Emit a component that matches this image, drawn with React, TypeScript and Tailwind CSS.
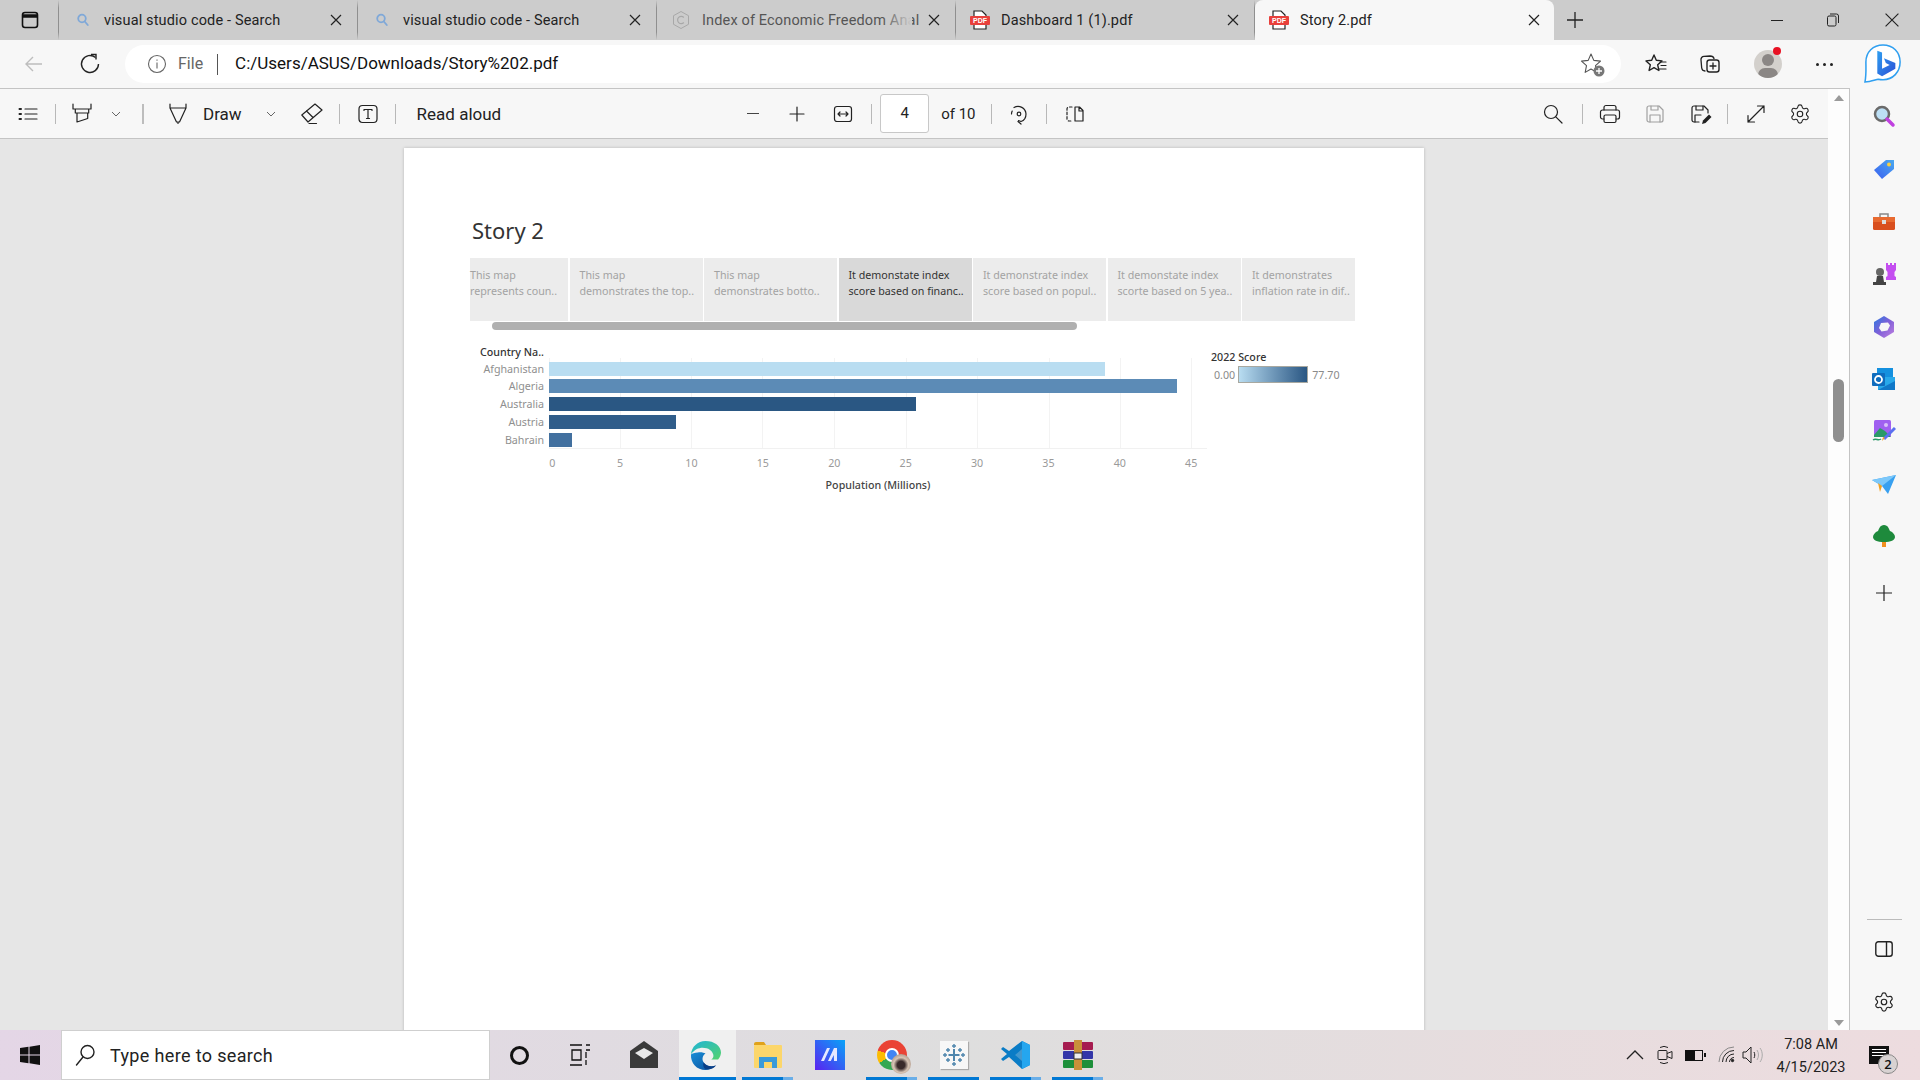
import React from "react";
import { Settings } from "lucide-react";

const S = ({ className = "", children, vb = "0 0 20 20" }: { className?: string; children: React.ReactNode; vb?: string }) => (
  <svg viewBox={vb} fill="none" stroke="#222" strokeWidth="1.2" strokeLinecap="round" strokeLinejoin="round" className={"shrink-0 " + className}>
    {children}
  </svg>
);

const Sep = ({ className = "" }: { className?: string }) => <div className={"w-px h-[20px] bg-[#b8b8b8] shrink-0 " + className} />;

const Lens = () => (
  <svg viewBox="0 0 16 16" className="w-[16px] h-[16px] shrink-0" fill="none" stroke="#7fa8d8" strokeWidth="1.8" strokeLinecap="round">
    <circle cx="7" cy="6.5" r="3.8" />
    <path d="M9.8 9.5l3 3.5" />
  </svg>
);

const CIcon = () => (
  <svg viewBox="0 0 20 20" className="w-[20px] h-[20px] shrink-0" fill="none" stroke="#a8a8a8" strokeWidth="1">
    <path d="M10 1.5l7.5 4.2v8.6L10 18.5l-7.5-4.2V5.7z" />
    <path d="M12.8 7.5a3.6 3.6 0 1 0 0 5" strokeWidth="1.2" />
  </svg>
);

const PdfIcon = () => (
  <div className="relative w-[20px] h-[20px] shrink-0">
    <svg viewBox="0 0 20 20" className="w-[20px] h-[20px]" fill="#fff" stroke="#222" strokeWidth="1.2">
      <path d="M4 1h8l4 4v14H4z" />
    </svg>
    <div className="absolute left-0 top-[6px] w-[20px] h-[9px] bg-[#e8403c] rounded-[1px] text-white text-[7px] leading-[9px] font-bold text-center font-['Liberation_Sans',sans-serif]">PDF</div>
  </div>
);

const X = ({ c = "#222" }: { c?: string }) => (
  <svg viewBox="0 0 12 12" className="w-[12px] h-[12px] shrink-0" fill="none" stroke={c} strokeWidth="1.2">
    <path d="M1 1l10 10M11 1L1 11" />
  </svg>
);

function Tab({ icon, title, active, fade }: { icon: React.ReactNode; title: string; active?: boolean; fade?: boolean }) {
  return (
    <div className={active ? "w-[299px] h-[40px] bg-[#f7f7f7] rounded-t-[8px] flex items-center shrink-0 pl-[14px]" : "w-[299px] h-[40px] flex items-center shrink-0 border-r border-[#8f8f8f] border-y-[8px] border-y-[#cccccc] pl-[14px]"}>
      <div className="w-[20px] flex justify-center shrink-0">{icon}</div>
      <div className={(fade ? "text-[#555] " : "text-[#222] ") + "relative ml-[11px] mt-[1px] w-[216px] whitespace-nowrap text-[14.5px] tracking-[0.15px]"}>
        {title}
        {fade && <div className="absolute left-[180px] top-0 bottom-0 w-[30px] bg-gradient-to-r from-transparent to-[#cccccc]" />}
      </div>
      <div className={active ? "ml-[12px]" : "ml-[10px]"}><X /></div>
    </div>
  );
}

function TabBar() {
  return (
    <div className="h-[40px] bg-[#cccccc] flex items-center shrink-0">
      <div className="w-[59px] h-[40px] flex items-center pl-[21px] border-r border-[#8f8f8f] border-y-[8px] border-y-[#cccccc] shrink-0">
        <svg viewBox="0 0 18 18" className="w-[18px] h-[18px]" fill="none" stroke="#111" strokeWidth="1.6">
          <rect x="1.5" y="1.5" width="15" height="15" rx="2.5" />
          <path d="M1.5 5h15" strokeWidth="3.5" />
        </svg>
      </div>
      <Tab icon={<Lens />} title="visual studio code - Search" />
      <Tab icon={<Lens />} title="visual studio code - Search" />
      <Tab icon={<CIcon />} title="Index of Economic Freedom Anal" fade />
      <Tab icon={<PdfIcon />} title="Dashboard 1 (1).pdf" />
      <Tab icon={<PdfIcon />} title="Story 2.pdf" active />
      <svg viewBox="0 0 18 18" className="w-[18px] h-[18px] ml-[12px]" fill="none" stroke="#222" strokeWidth="1.3"><path d="M9 1v16M1 9h16" /></svg>
      <div className="ml-auto flex items-center">
        <div className="w-[12px] h-px bg-[#222]" />
        <svg viewBox="0 0 14 14" className="w-[14px] h-[14px] ml-[43px]" fill="none" stroke="#222" strokeWidth="1"><rect x="1.5" y="3" width="8.5" height="10" rx="1.5" /><path d="M4 1h6.5A2 2 0 0 1 12.500 3v7" /></svg>
        <div className="ml-[45px] mr-[21px]"><svg viewBox="0 0 12 12" className="w-[14px] h-[14px]" fill="none" stroke="#222" strokeWidth="1"><path d="M.5.5l11 11M11.500.5l-11 11" /></svg></div>
      </div>
    </div>
  );
}

function AddressBar() {
  return (
    <div className="h-[48px] bg-[#f7f7f7] flex items-center shrink-0">
      <svg viewBox="0 0 20 20" className="w-[20px] h-[20px] ml-[24px]" fill="none" stroke="#bdbdbd" strokeWidth="1.4"><path d="M18 10H2M9 3l-7 7 7 7" /></svg>
      <svg viewBox="0 0 22 22" className="w-[22px] h-[22px] ml-[35px]" fill="none" stroke="#222" strokeWidth="1.4"><path d="M16.500 4.500A8.500 8.500 0 1 0 19.500 11" /><path d="M12 1.500h5v5" /></svg>
      <div className="ml-[24px] w-[1496px] h-[38px] bg-white rounded-full flex items-center">
        <svg viewBox="0 0 20 20" className="w-[20px] h-[20px] ml-[22px]" fill="none" stroke="#666" strokeWidth="1.1"><circle cx="10" cy="10" r="8.500" /><path d="M10 8.500v6M10 5.500v1.300" /></svg>
        <span className="ml-[11px] text-[16px] text-[#666]">File</span>
        <div className="ml-[14px] w-px h-[21px] bg-[#555]" />
        <span className="ml-[17px] text-[17px] text-[#111]">C:/Users/ASUS/Downloads/Story%202.pdf</span>
        <div className="ml-auto mr-[17px] relative w-[24px] h-[24px]">
          <svg viewBox="0 0 24 24" className="w-[24px] h-[24px]" fill="none" stroke="#555" strokeWidth="1.1" strokeLinejoin="round"><path d="M11 2l2.800 6.400 6.700.7-5 4.600 1.300 6.700L11 17l-5.800 3.400 1.300-6.700-5-4.600 6.700-.7z" /></svg>
          <svg viewBox="0 0 12 12" className="absolute right-[-1px] bottom-[-1px] w-[12px] h-[12px]"><circle cx="6" cy="6" r="5.500" fill="#777" /><path d="M6 3v6M3 6h6" stroke="#fff" strokeWidth="1.300" /></svg>
        </div>
      </div>
      <S vb="0 0 24 24" className="w-[24px] h-[24px] ml-[23px]">
        <path d="M10 3l2.300 5.300 5.700.6-4.300 3.900 1.200 5.700-4.900-2.900-4.900 2.900 1.200-5.700L2 8.900l5.700-.6z" strokeWidth="1.400" />
        <path d="M16 10h6M17 13.500h5M15 17h7" />
      </S>
      <S vb="0 0 24 24" className="w-[24px] h-[24px] ml-[30px]">
        <path d="M7 19c-2 0-3-1-3.300-3L3 8c-.2-2 1-3.500 3-3.600L12 4c2 0 3.500.5 4 2.500" strokeWidth="1.300" />
        <rect x="9" y="8" width="12" height="12" rx="2.500" strokeWidth="1.400" />
        <path d="M15 11v6M12 14h6" strokeWidth="1.300" />
      </S>
      <div className="ml-[32px] relative w-[28px] h-[28px] rounded-full bg-[#d3d0cc] overflow-hidden shrink-0">
        <div className="absolute left-[8px] top-[4px] w-[12px] h-[12px] rounded-full bg-[#8b8785]" />
        <div className="absolute left-[4px] top-[18px] w-[20px] h-[14px] rounded-full bg-[#8b8785]" />
      </div>
      <div className="relative w-0 h-[28px]"><div className="absolute left-[-9px] top-[-3px] w-[8px] h-[8px] rounded-full bg-[#e81123]" /></div>
      <div className="ml-[34px] flex gap-[4px]">
        <div className="w-[3px] h-[3px] rounded-full bg-[#222]" />
        <div className="w-[3px] h-[3px] rounded-full bg-[#222]" />
        <div className="w-[3px] h-[3px] rounded-full bg-[#222]" />
      </div>
      <svg viewBox="0 0 40 44" className="w-[38px] h-[42px] ml-[31px] shrink-0">
        <defs><linearGradient id="bingb" x1="0" y1="0" x2="1" y2="1"><stop offset="0" stopColor="#2f9ff0" /><stop offset="1" stopColor="#2a4fd6" /></linearGradient></defs>
        <path d="M20 2C9.500 2 2 9.500 2 20c0 6 .5 14-1 21 5 0 10-2 14-3 2 .5 3 .5 5 .5 10.500 0 18-8 18-18.500S30.500 2 20 2z" fill="#fff" stroke="#2f9ff0" strokeWidth="1.600" />
        <path d="M14 8l5 2v17l8-4-4-2-2-5 12 5v6l-14 8-5-3z" fill="url(#bingb)" />
      </svg>
    </div>
  );
}

function Toolbar() {
  return (
    <div className="h-[50px] bg-[#f7f7f7] border-b border-[#c4c4c4] flex items-center shrink-0 text-[17px] text-[#222]">
      <S className="w-[20px] h-[20px] ml-[18px]">
        <path d="M7 5h12M7 10h12M7 15h12" />
        <path d="M1.500 5h1.500M1.500 10h1.500M1.500 15h1.500" strokeWidth="2" />
      </S>
      <Sep className="ml-[17px]" />
      <S className="w-[20px] h-[22px] ml-[16px]" vb="0 0 20 22">
        <path d="M1 1v5h18V1M3.300 6v4h13.400V6M5 10v9l10.700-3.500V10" />
      </S>
      <svg viewBox="0 0 10 6" className="w-[10px] h-[6px] ml-[19px]" fill="none" stroke="#666" strokeWidth="1"><path d="M1 1l4 4 4-4" /></svg>
      <div className="w-[2px] h-[20px] bg-[#bdbdbd] ml-[21px]" />
      <S className="w-[20px] h-[22px] ml-[24px]" vb="0 0 20 22">
        <path d="M2 1v4M18 1v4M2 5h16L11.500 19h-3zM10 19v1.500" />
      </S>
      <span className="ml-[15px] mt-[2px]">Draw</span>
      <svg viewBox="0 0 10 6" className="w-[10px] h-[6px] ml-[24px]" fill="none" stroke="#666" strokeWidth="1"><path d="M1 1l4 4 4-4" /></svg>
      <S className="w-[22px] h-[22px] ml-[25px]" vb="0 0 22 22">
        <path d="M.8 12L14 1l7 6L7 19zM5.500 8l6.500 6.500M8 20.500h7.500" />
      </S>
      <Sep className="ml-[16px]" />
      <S className="w-[20px] h-[20px] ml-[18px]">
        <rect x="1" y="1.500" width="18" height="17" rx="3.500" />
        <path d="M6 6.500V5.500h8v1M10 5.500v9M8.500 14.500h3" />
      </S>
      <Sep className="ml-[17px]" />
      <span className="ml-[21px] mt-[2px]">Read aloud</span>
      <div className="w-[12px] h-[1.500px] bg-[#444] ml-[246px]" />
      <S className="w-[16px] h-[16px] ml-[30px]" vb="0 0 16 16"><path d="M8 1v14M1 8h14" /></S>
      <S className="w-[20px] h-[20px] ml-[28px]">
        <rect x="1.500" y="2.500" width="17" height="15" rx="2.500" />
        <path d="M5 10h10M7 8l-2 2 2 2M13 8l2 2-2 2" />
      </S>
      <Sep className="ml-[18px]" />
      <div className="ml-[8px] w-[49px] h-[39px] bg-white border border-[#c8c8c8] rounded-[3px] flex items-center justify-center text-[15px]">4</div>
      <span className="ml-[12px] text-[15px] mt-[1px]">of 10</span>
      <Sep className="ml-[15px]" />
      <S className="w-[20px] h-[22px] ml-[17px]" vb="0 0 20 22">
        <path d="M5 4.500a8 8 0 0 1 12 6.500c0 3.500-2 6.500-5 7.500M9 18.500l3 2.500M12 18.500l-2.500-1M2.500 11a7.500 7.500 0 0 1 .7-3" />
        <circle cx="10" cy="11" r="1.800" />
      </S>
      <Sep className="ml-[17px]" />
      <S className="w-[20px] h-[20px] ml-[18px]">
        <path d="M7 3H4a2 2 0 0 0-2 2v10a2 2 0 0 0 2 2h3" strokeDasharray="2.500 2" />
        <path d="M10 3h4.500L18 6.500V17h-8zM14 3v4h4" />
      </S>
      <div className="ml-auto flex items-center mr-[17px]">
        <S className="w-[20px] h-[20px]"><circle cx="8" cy="8" r="6.500" /><path d="M12.800 12.800L19 19" /></S>
        <Sep className="ml-[19px]" />
        <S className="w-[22px] h-[20px] ml-[16px]" vb="0 0 22 20">
          <path d="M5 6V3.500A2 2 0 0 1 7 1.500h8a2 2 0 0 1 2 2V6" />
          <path d="M5 15H3.500A2 2 0 0 1 1.500 13V8A2 2 0 0 1 3.500 6h15a2 2 0 0 1 2 2v5a2 2 0 0 1-2 2H17" />
          <rect x="5" y="11" width="12" height="7.500" rx="1.500" />
        </S>
        <S className="w-[20px] h-[20px] ml-[24px] opacity-40">
          <path d="M4 2h10l4 4v10a2 2 0 0 1-2 2H4a2 2 0 0 1-2-2V4a2 2 0 0 1 2-2z" />
          <path d="M6 2v4h7V2M5 18v-7h10v7" />
        </S>
        <div className="relative ml-[25px] w-[20px] h-[20px]">
          <S className="w-[20px] h-[20px]">
            <path d="M9 18H4a2 2 0 0 1-2-2V4a2 2 0 0 1 2-2h10l4 4v3" />
            <path d="M6 2v4h7V2M5 18v-7h6" />
          </S>
          <svg viewBox="0 0 12 12" className="absolute right-[-3px] bottom-[-1px] w-[12px] h-[12px]"><path d="M1 11l1-3.500 6-6 2.500 2.500-6 6z" fill="#222" /></svg>
        </div>
        <Sep className="ml-[17px]" />
        <S className="w-[20px] h-[20px] ml-[18px]"><path d="M2 18L18 2M11.500 2H18v6.500M2 11.500V18h6.500" /></S>
        <Settings className="w-[22px] h-[22px] ml-[23px]" strokeWidth={1.2} color="#222" />
      </div>
    </div>
  );
}

const tabs = [
  ["This map", "represents coun..", "w-[98px] pl-0"],
  ["This map", "demonstrates the top..", "w-[133px] pl-[10px]"],
  ["This map", "demonstrates botto..", "w-[133px] pl-[10px]"],
  ["It demonstate index", "score based on financ..", "w-[133px] pl-[10px]"],
  ["It demonstrate index", "score based on popul..", "w-[133px] pl-[10px]"],
  ["It demonstate index", "scorte based on 5 yea..", "w-[133px] pl-[10px]"],
  ["It demonstrates", "inflation rate in dif..", "w-[113px] pl-[10px]"],
];

const rows = [
  { n: "Afghanistan", w: "w-[556px]", c: "bg-[#b9ddf1]", m: "mt-0" },
  { n: "Algeria", w: "w-[628px]", c: "bg-[#5c8bb6]", m: "mt-[3px]" },
  { n: "Australia", w: "w-[367px]", c: "bg-[#2a5783]", m: "mt-[4px]" },
  { n: "Austria", w: "w-[127px]", c: "bg-[#305d8a]", m: "mt-[4px]" },
  { n: "Bahrain", w: "w-[23px]", c: "bg-[#42709f]", m: "mt-[4px]" },
];

const grid = ["left-0", "left-[71px]", "left-[142px]", "left-[213px]", "left-[285px]", "left-[357px]", "left-[428px]", "left-[500px]", "left-[571px]", "left-[642px]"];
const ticks = ["0", "5", "10", "15", "20", "25", "30", "35", "40", "45"];

function Chart() {
  return (
    <div className="pl-[66px] font-['Noto_Sans',sans-serif]">
      <div className="pt-[66px] h-[110px] text-[22px] leading-[32px] text-[#333] pl-[2px]">Story 2</div>
      <div className="flex gap-[1.500px] text-[10.700px] leading-[16px] text-[#a3a3a3]">
        {tabs.map((t, i) => (
          <div key={i} className={t[2] + " h-[63px] pt-[9px] whitespace-nowrap shrink-0 " + (i === 3 ? "bg-[#d9d9d9] text-[#333]" : "bg-[#ececec]")}>
            <div>{t[0]}</div>
            <div>{t[1]}</div>
          </div>
        ))}
      </div>
      <div className="ml-[22px] mt-px w-[585px] h-[8px] rounded-full bg-[#b0b0b0]" />
      <div className="flex mt-[15px]">
        <div className="w-[79px] shrink-0 pr-[5px] text-right text-[10.700px] leading-[14px] text-[#8f8f8f]">
          <div className="h-[14px] text-[#333] font-medium mb-[3px]">Country Na..</div>
          {rows.map((r) => (
            <div key={r.n} className={r.m + " h-[14px]"}>{r.n}</div>
          ))}
        </div>
        <div className="w-[658px] shrink-0 pt-[13px]">
          <div className="relative h-[91px] border-b border-[#f1f1f1] pt-[4px]">
            {grid.map((g) => (
              <div key={g} className={"absolute top-0 bottom-0 w-px bg-[#f3f3f3] " + g} />
            ))}
            {rows.map((r) => (
              <div key={r.n} className={"relative h-[14px] " + r.w + " " + r.c + " " + r.m} />
            ))}
          </div>
          <div className="relative flex mt-[6px] h-[16px] ml-[-36px] text-[10.700px] leading-[16px] text-[#9a9a9a]">
            {ticks.map((t, i) => (
              <div key={t} className={"w-[71.400px] shrink-0 text-center " + (i === 0 ? "pl-[7px]" : "")}>{t}</div>
            ))}
          </div>
          <div className="text-center text-[10.700px] leading-[14px] text-[#444] font-medium mt-[7px]">Population (Millions)</div>
        </div>
        <div className="ml-[4px] pt-[5px] text-[10.700px] leading-[14px]">
          <div className="text-[#333] font-medium">2022 Score</div>
          <div className="flex items-center mt-[2px] text-[#8a8a8a]">
            <span className="ml-[3px]">0.00</span>
            <div className="ml-[3px] w-[70px] h-[17px] border border-[#a8a8a0] bg-gradient-to-r from-[#b9ddf1] to-[#2a5783]" />
            <span className="ml-[4px]">77.70</span>
          </div>
        </div>
      </div>
    </div>
  );
}

function Tile({ children, bar }: { children: React.ReactNode; bar?: "two" | "one" }) {
  return (
    <div className="relative w-[51px] h-[50px] mr-[11px] flex items-center justify-center shrink-0">
      {children}
      {bar && (
        <div className="absolute left-0 bottom-0 right-0 h-[3px] flex">
          <div className={(bar === "two" ? "w-[41px] " : "w-[51px] ") + "bg-[#0078d4]"} />
          {bar === "two" && <div className="w-[10px] bg-[#6aaee8]" />}
        </div>
      )}
    </div>
  );
}

const EdgeLogo = () => (
  <svg viewBox="0 0 32 32" className="w-[31px] h-[31px] mr-[4px]">
    <defs>
      <linearGradient id="edgeA" x1="0" y1="0" x2="1" y2="1"><stop offset="0" stopColor="#1fb4d8" /><stop offset="1" stopColor="#54d36c" /></linearGradient>
      <linearGradient id="edgeB" x1="0" y1="0" x2="1" y2="1"><stop offset="0" stopColor="#1a8fd8" /><stop offset="1" stopColor="#0b4f9c" /></linearGradient>
    </defs>
    <path d="M16 1C8 1 1.500 7 1 15c3-5 8-7 12-7 6 0 10 3 11 7 .5 2 0 4-2 5h7c2-2 3-5 3-7C32 6 25 1 16 1z" fill="url(#edgeA)" />
    <path d="M1 15c-.5 9 6 16 15 16 4 0 7-1.500 10-4-5 1-10 0-12-4-2-3-1-7 2-9-2-1-5-2-8-1-3 .5-6 1-7 2z" fill="url(#edgeB)" />
    <path d="M14 23c3 4 8 5 13 3-2 3-7 5-11 4-2-1-3-4-2-7z" fill="#0b3f86" />
  </svg>
);

function Taskbar() {
  return (
    <div className="h-[50px] shrink-0 flex items-center bg-gradient-to-r from-[#e4d6e6] via-[#dedede] to-[#eddcdf] font-['Open_Sans',sans-serif]">
      <svg viewBox="0 0 20 20" className="w-[20px] h-[20px] ml-[20px] shrink-0" fill="#111"><path d="M0 3l8.500-1.200v7.700H0zM9.500 1.700L20 0v9.500H9.500zM0 10.500h8.500v7.700L0 17zM9.500 10.500H20V20L9.500 18.300z" /></svg>
      <div className="ml-[21px] w-[429px] h-[50px] bg-white border border-[#cfcfcf] flex items-center shrink-0">
        <svg viewBox="0 0 22 24" className="w-[22px] h-[24px] ml-[12px]" fill="none" stroke="#222" strokeWidth="1.400" strokeLinecap="round"><circle cx="13.500" cy="9" r="6.500" /><path d="M9 14l-6.500 8" /></svg>
        <span className="ml-[14px] text-[18px] text-[#222] font-['Roboto',sans-serif] tracking-[0.35px]">Type here to search</span>
      </div>
      <div className="ml-[20px] w-[19px] h-[19px] rounded-full border-[3px] border-[#111] shrink-0" />
      <svg viewBox="0 0 22 24" className="w-[22px] h-[24px] ml-[40px] shrink-0" fill="none" stroke="#111" strokeWidth="1.300"><path d="M1 2h12M1 22h12M3 7h9v10H3zM17 2h4M17 7h4M17 9v6M17 17v5" /></svg>
      <svg viewBox="0 0 30 30" className="w-[30px] h-[30px] ml-[38px] shrink-0"><path d="M1 11L15 1l14 10v17H1z" fill="#3a3a3a" /><path d="M6 13l9-5 9 5-9 6z" fill="#e8e8e8" /><path d="M1 11l14 10 14-10v17H1z" fill="#3a3a3a" /></svg>
      <div className="ml-[20px] relative w-[57px] h-[50px] mr-[6px] bg-[#f0f0f0] flex items-center justify-center shrink-0">
        <EdgeLogo />
        <div className="absolute left-0 right-0 bottom-0 h-[3px] bg-[#0078d4]" />
      </div>
      <Tile bar="two">
        <svg viewBox="0 0 28 26" className="w-[28px] h-[26px]"><path d="M0 2a2 2 0 0 1 2-2h8l2 3h-12z" fill="#e0a21a" /><rect x="0" y="3" width="28" height="23" rx="1" fill="#fcd66a" /><path d="M5 26V15h18v11h-5v-6h-8v6z" fill="#3a9ad9" /></svg>
      </Tile>
      <Tile>
        <svg viewBox="0 0 30 30" className="w-[30px] h-[30px]">
          <defs><linearGradient id="ma" x1="0" y1="1" x2="1" y2="0"><stop offset="0" stopColor="#5b22f0" /><stop offset="1" stopColor="#08a4f8" /></linearGradient></defs>
          <rect width="30" height="30" fill="url(#ma)" />
          <path d="M6 21l6-13h3l-6 13zM13 21l6-13h3v13h-3l-.2-6-3 6z" fill="#e6e8ff" />
        </svg>
      </Tile>
      <Tile bar="two">
        <div className="relative w-[30px] h-[30px]">
          <div className="w-[30px] h-[30px] rounded-full bg-[conic-gradient(#ea4335_0_33%,#34a853_33%_66%,#fbbc05_66%_80%,#ea4335_80%)] flex items-center justify-center">
            <div className="w-[14px] h-[14px] rounded-full bg-[#4285f4] border-[2px] border-white" />
          </div>
          <div className="absolute right-[-4px] bottom-[-4px] w-[20px] h-[20px] rounded-full bg-[radial-gradient(circle_at_50%_55%,#3a2a2a_0_25%,#d8c4b4_50%,#8a7468_100%)]" />
        </div>
      </Tile>
      <Tile bar="one">
        <div className="w-[28px] h-[28px] bg-[#f7f7f7] shadow-[1px_1px_1px_#aaa] flex items-center justify-center">
          <svg viewBox="0 0 26 26" className="w-[26px] h-[26px]" fill="none" stroke="#4f86ad" strokeWidth="1.400">
            <path d="M13 7v12M7.500 13h11" strokeWidth="2" />
            <path d="M13 2v4M11 4h4M13 20v4M11 22h4M2 13h4M4 11v4M20 13h4M22 11v4M7 6v4M5 8h4M19 6v4M17 8h4M7 16v4M5 18h4M19 16v4M17 18h4" />
          </svg>
        </div>
      </Tile>
      <Tile bar="two">
        <svg viewBox="0 0 30 30" className="w-[30px] h-[30px]">
          <path d="M21 1l8 4v20l-8 4-13-12-6 4-2-2 6-5-6-5 2-2 6 4z" fill="#0a7cc6" />
          <path d="M21 1l8 4v20l-8 4z" fill="#25a6ef" />
          <path d="M21 9l-7 6 7 6z" fill="#eaeaea" opacity=".25" />
        </svg>
      </Tile>
      <Tile bar="two">
        <svg viewBox="0 0 30 30" className="w-[30px] h-[30px]">
          <rect x="0" y="2" width="30" height="8" rx="1" fill="#a61c50" />
          <rect x="0" y="11" width="30" height="8" rx="1" fill="#3336a8" />
          <rect x="0" y="20" width="30" height="8" rx="1" fill="#1d8f3a" />
          <rect x="11" y="0" width="8" height="30" fill="#c9903a" />
          <rect x="11" y="13" width="8" height="6" fill="#eee" stroke="#333" />
        </svg>
      </Tile>
      <div className="ml-auto flex items-center shrink-0">
        <svg viewBox="0 0 18 10" className="w-[18px] h-[10px]" fill="none" stroke="#222" strokeWidth="1.300"><path d="M1 9l8-8 8 8" /></svg>
        <svg viewBox="0 0 16 20" className="w-[16px] h-[20px] ml-[13px]" fill="none" stroke="#222" strokeWidth="1"><path d="M3 2.500a8 8 0 0 1 8 0M3 17.500a8 8 0 0 0 8 0" /><rect x="1" y="5.500" width="9" height="9" rx="1" /><path d="M10 8.500l5-2v7l-5-2" /></svg>
        <div className="relative w-[18px] h-[11px] border-[1.500px] border-[#111] ml-[12px]">
          <div className="w-[9px] h-full bg-[#111]" />
          <div className="absolute right-[-3.500px] top-[2px] w-[2px] h-[4px] bg-[#111]" />
        </div>
        <svg viewBox="0 0 18 18" className="w-[18px] h-[18px] ml-[15px]" fill="none" stroke="#222" strokeWidth="1"><path d="M1 16A15 15 0 0 1 16 1" stroke="#888" /><path d="M4.500 16A11.500 11.500 0 0 1 16 4.500" /><path d="M8 16a8 8 0 0 1 8-8" /><path d="M11.500 16a4.500 4.500 0 0 1 4.500-4.500" /><circle cx="14.500" cy="14.500" r="1.200" fill="#222" /></svg>
        <svg viewBox="0 0 22 20" className="w-[22px] h-[20px] ml-[6px]" fill="none" stroke="#222" strokeWidth="1"><path d="M1 7v6h3l5 5V2L4 7z" /><path d="M12 7c1 2 1 4 0 6" /><path d="M15 5c2 3 2 7 0 10M18 3c3 4 3 10 0 14" stroke="#aaa" /></svg>
        <div className="ml-[10px] mt-[2px] w-[74px] text-center text-[14.500px] leading-[23px] text-[#222] font-['Roboto',sans-serif]">
          <div>7:08 AM</div>
          <div>4/15/2023</div>
        </div>
        <div className="relative ml-[21px] w-[20px] h-[18px] bg-[#111] mr-[31px] flex flex-col gap-[2px] pt-[3px] px-[3px]">
          <div className="h-px bg-white" />
          <div className="h-px bg-white" />
          <div className="h-px bg-white" />
          <div className="absolute left-[9px] top-[8px] w-[20px] h-[20px] rounded-full bg-[#d8d2d2] border border-[#888] text-[13px] leading-[18px] text-center text-[#111] font-semibold">2</div>
        </div>
      </div>
    </div>
  );
}

const SideIcons = [
  <svg key="s" viewBox="0 0 24 24" className="w-[24px] h-[24px]"><circle cx="10" cy="9" r="7" fill="#bcdff5" stroke="#6a6a6a" strokeWidth="2.500" /><path d="M15 14l6 6" stroke="#c040e0" strokeWidth="3.500" strokeLinecap="round" /></svg>,
  <svg key="t" viewBox="0 0 24 24" className="w-[24px] h-[24px]"><defs><linearGradient id="tg" x1="0" y1="1" x2="1" y2="0"><stop offset="0" stopColor="#3a5ff0" /><stop offset="1" stopColor="#4aa8f0" /></linearGradient></defs><path d="M2 13L14 3h8v9L10 22z" fill="url(#tg)" /><circle cx="17" cy="7.500" r="2" fill="#f8d040" /></svg>,
  <svg key="b" viewBox="0 0 24 24" className="w-[24px] h-[24px]"><path d="M8 7V4h8v3" fill="none" stroke="#888" strokeWidth="1.500" /><rect x="1" y="7" width="22" height="13" rx="1.500" fill="#d94f1e" /><rect x="1" y="7" width="22" height="5" fill="#e86a30" /><rect x="10" y="10" width="4" height="4" fill="#ddd" /></svg>,
  <svg key="c" viewBox="0 0 24 24" className="w-[24px] h-[24px]"><path d="M14 1h2v2h2V1h2v2h2V1h2v7l-1.500 2v4l1.500 1v3h-10v-3l1.500-1v-4L14 8z" fill="#c44ef0" /><circle cx="8" cy="10" r="4" fill="#666" /><path d="M5 14h6l1 6h2v3H1v-3h3z" fill="#444" /></svg>,
  <svg key="m" viewBox="0 0 24 24" className="w-[24px] h-[24px]"><defs><linearGradient id="mg" x1="0" y1="0" x2="1" y2="1"><stop offset="0" stopColor="#2a7ae0" /><stop offset=".5" stopColor="#8060d8" /><stop offset="1" stopColor="#c080e0" /></linearGradient></defs><path d="M12 1l10 6v10l-10 6-10-6V7z" fill="url(#mg)" /><path d="M9 8l7-.5 2 3-2.500 5-6 1L7 13z" fill="#f7f7f7" /></svg>,
  <svg key="o" viewBox="0 0 24 24" className="w-[24px] h-[24px]"><rect x="5" y="1" width="16" height="14" fill="#1490df" /><path d="M6 10l17 0v13H6z" fill="#28a8ea" /><path d="M6 23l17-9v9z" fill="#1078c8" /><rect x="0" y="6" width="13" height="13" rx="1" fill="#0f6cbd" /><circle cx="6.500" cy="12.500" r="3.500" fill="none" stroke="#fff" strokeWidth="1.800" /></svg>,
  <svg key="p" viewBox="0 0 24 24" className="w-[24px] h-[24px]"><rect x="2" y="1" width="17" height="17" rx="1.500" fill="#a060f0" /><path d="M2 16l6-7 5 3 6 6H2z" fill="#2a9a68" /><circle cx="14" cy="6" r="2" fill="#d8c0f8" /><path d="M12 20l11-11" stroke="#5a70f0" strokeWidth="3" /><path d="M10 22l3-3-2-1z" fill="#f0a020" /><path d="M1 21c3-2 5 1 8-1" stroke="#2a9a68" strokeWidth="1.500" fill="none" /></svg>,
  <svg key="a" viewBox="0 0 24 24" className="w-[24px] h-[24px]"><path d="M0 8l24-5-8 19-6-8z" fill="#38a0f0" /><path d="M0 8l10 6 14-11z" fill="#7cc8fa" /><path d="M6 11l4 3-2 6z" fill="#f0a020" /></svg>,
  <svg key="g" viewBox="0 0 24 24" className="w-[24px] h-[24px]"><path d="M12 1c4 0 5 4 6 6 3 1 5 4 5 6 0 3-4 5-11 5S1 16 1 13c0-2 2-5 5-6 1-2 2-6 6-6z" fill="#1e8a3c" /><rect x="10" y="18" width="4" height="5" fill="#f09020" /></svg>,
];

function Sidebar() {
  return (
    <div className="w-[70px] bg-[#f7f7f7] flex flex-col items-center shrink-0 pr-[2px] pt-[17px] pb-[17px]">
      <div className="flex flex-col items-center gap-[28.400px]">{SideIcons}</div>
      <svg viewBox="0 0 16 16" className="w-[16px] h-[16px] mt-[37px]" fill="none" stroke="#222" strokeWidth="1.200"><path d="M8 0v16M0 8h16" /></svg>
      <div className="mt-auto w-[35px] h-px bg-[#bbb]" />
      <S className="w-[18px] h-[16px] mt-[21px]" vb="0 0 18 16"><rect x=".8" y=".8" width="16.400" height="14.400" rx="2.500" strokeWidth="1.400" /><path d="M11.500 1v14" strokeWidth="1.400" /></S>
      <Settings className="w-[22px] h-[22px] mt-[34px]" strokeWidth={1.3} color="#222" />
    </div>
  );
}

export default function App() {
  return (
    <div className="w-[1920px] h-[1080px] overflow-hidden flex flex-col font-['Roboto',sans-serif] bg-white">
      <TabBar />
      <AddressBar />
      <div className="flex flex-1 min-h-0">
        <div className="w-[1850px] shrink-0 flex flex-col border-t border-r border-[#c4c4c4]">
          <div className="flex flex-1 min-h-0">
            <div className="w-[1828px] shrink-0 flex flex-col min-h-0">
              <Toolbar />
              <div className="flex-1 min-h-0 bg-[#e6e6e6] flex justify-center overflow-hidden">
                <div className="w-[1020px] h-[900px] mt-[9px] bg-white shadow-[0_0_3px_rgba(0,0,0,0.2)]">
                  <Chart />
                </div>
              </div>
            </div>
            <div className="flex-1 bg-[#fdfdfd] flex flex-col items-center pt-[6px] pb-[4px]">
              <div className="w-0 h-0 border-x-[5px] border-x-transparent border-b-[6px] border-b-[#9a9a9a]" />
              <div className="w-[11px] h-[63px] rounded-full bg-[#8f8f8f] mt-[278px]" />
              <div className="mt-auto w-0 h-0 border-x-[5px] border-x-transparent border-t-[6px] border-t-[#9a9a9a]" />
            </div>
          </div>
        </div>
        <Sidebar />
      </div>
      <Taskbar />
    </div>
  );
}
